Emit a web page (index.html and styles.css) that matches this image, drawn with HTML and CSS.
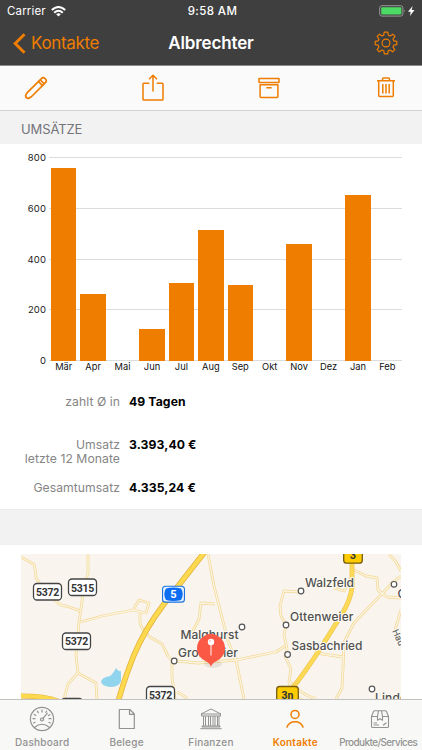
FILE: index.html
```html
<!DOCTYPE html>
<html lang="de">
<head>
<meta charset="utf-8">
<title>Albrechter</title>
<link rel="stylesheet" href="styles.css">
</head>
<body>
<div class="app">
  <header class="header">
    <div class="status">
      <div class="status-left"><span class="carrier">Carrier</span>
        <svg class="wifi" width="15" height="11" viewBox="0 0 15 11"><g fill="none" stroke="#fff" stroke-width="2"><path d="M.8 4.1Q7.5-2.1 14.2 4.1"/><path d="M3.2 6.7Q7.5 2.7 11.8 6.7"/></g><path d="M5.2 8.2Q7.5 6.3 9.8 8.2L7.5 10.6z" fill="#fff"/></svg>
      </div>
      <span class="clock">9:58 AM</span>
      <svg class="battery" width="38" height="12" viewBox="0 0 38 12"><rect x=".7" y=".7" width="23.2" height="10.4" rx="2.2" fill="none" stroke="#999" stroke-width="1"/><rect x="2.2" y="2.2" width="20.2" height="7.4" rx="1" fill="#4cd964"/><path d="M25.2 4.2q1.6 1.7 0 3.4z" fill="#999"/><path d="M33.6.9L29 6.7h2.7L30.9 11l4.6-6h-2.8z" fill="#fff"/></svg>
    </div>
    <nav class="navbar">
      <a class="back"><svg width="13" height="21" viewBox="0 0 13 21"><path d="M11.5 1.2L2.2 10.5l9.3 9.3" fill="none" stroke="#ef7d00" stroke-width="3"/></svg><span>Kontakte</span></a>
      <h1 class="title">Albrechter</h1>
      <svg class="gear" width="24" height="24" viewBox="0 0 24 24"><g fill="none" stroke="#ef7d00" stroke-width="1.2" stroke-linejoin="round"><circle cx="12" cy="12" r="3.9"/><path d="M10.2 1.2h3.6l.5 3 1.9.8 2.6-1.8 2.2 2.2L19 8l.8 1.8 3 .5v3.4l-3 .5L19 16l1.8 2.6-2.2 2.2L16 19l-1.8.8-.5 3h-3.4l-.5-3L8 19l-2.6 1.8-2.2-2.2L5 16l-.8-1.8-3-.5v-3.4l3-.5L5 8 3.2 5.4l2.2-2.2L8 5l1.7-.8z"/></g></svg>
    </nav>
  </header>

  <div class="toolbar">
    <svg width="24" height="26" viewBox="0 0 24 26"><g transform="translate(12 13) rotate(-45)" fill="none" stroke="#ef7d00" stroke-width="1.7" stroke-linejoin="round"><path d="M-9.5-2.9H10.5q2.6 0 2.6 2.900t-2.600 2.900H-9.500L-12.800 2q-1.500-2 0-4z"/><path d="M6.300-2.900v5.800M8.800-2.900v5.800"/></g></svg>
    <svg width="24" height="28" viewBox="0 0 24 28"><g fill="none" stroke="#ef7d00" stroke-width="1.5" stroke-linejoin="round"><path d="M8.300 9.200H2.800q-.8 0-.8.8v15.200q0 .8.8.8h18.400q.8 0 .8-.8V10q0-.8-.8-.8h-5.500M12 17.500V1.500M8 5.300l4-4 4 4"/></g></svg>
    <svg width="24" height="24" viewBox="0 0 24 24"><g fill="none" stroke="#ef7d00" stroke-width="1.5" stroke-linejoin="round"><rect x="2" y="2.400" width="20" height="4.200" rx=".4"/><path d="M3.100 8.700h17.800v11.700q0 1-1 1H4.100q-1 0-1-1zM9.300 11.700h5.400"/></g></svg>
    <svg width="24" height="24" viewBox="0 0 24 24"><g fill="none" stroke="#ef7d00" stroke-width="1.5" stroke-linejoin="round"><path d="M3 4.800h18M4.700 4.800v14.700q0 1 1 1h12.600q1 0 1-1V4.800M8.500 4.600V3q0-1 1-1h5q1 0 1 1v1.600M8.800 8v9.500M12 8v9.500M15.200 8v9.500"/></g></svg>
  </div>

  <h2 class="section">UMSÄTZE</h2>

  <section class="chart">
    <div class="y-axis"><span>800</span><span>600</span><span>400</span><span>200</span><span>0</span></div>
    <div class="plot-wrap">
      <div class="plot">
        <div class="col"><div class="bar" style="height:94.8%"></div></div>
        <div class="col"><div class="bar" style="height:33%"></div></div>
        <div class="col"></div>
        <div class="col"><div class="bar" style="height:15.8%"></div></div>
        <div class="col"><div class="bar" style="height:38.4%"></div></div>
        <div class="col"><div class="bar" style="height:64.2%"></div></div>
        <div class="col"><div class="bar" style="height:37.2%"></div></div>
        <div class="col"></div>
        <div class="col"><div class="bar" style="height:57.5%"></div></div>
        <div class="col"></div>
        <div class="col"><div class="bar" style="height:81.3%"></div></div>
        <div class="col"></div>
      </div>
      <div class="x-axis"><span>Mär</span><span>Apr</span><span>Mai</span><span>Jun</span><span>Jul</span><span>Aug</span><span>Sep</span><span>Okt</span><span>Nov</span><span>Dez</span><span>Jan</span><span>Feb</span></div>
    </div>
  </section>

  <dl class="stats">
    <dt>zahlt Ø in</dt><dd>49 Tagen</dd>
    <dt>Umsatz<br>letzte 12 Monate</dt><dd>3.393,40 €</dd>
    <dt>Gesamtumsatz</dt><dd>4.335,24 €</dd>
  </dl>

  <div class="divider"></div>

  <div class="map-wrap">
    <svg class="map" width="380" height="145" viewBox="21 554 380 145">
      <rect x="21" y="554" width="380" height="145" fill="#f9f5ee"/>
      <defs>
        <g id="roads" fill="none" stroke-linejoin="round">
          <path d="M21 557L34 564.5Q36 571 36 578L44 590L57 602Q61 606 66 606L75 609L80 611"/>
          <path d="M88 554V574L83 586L82 602L79 622L76 655L78 673L68 684L64 699"/>
          <path d="M78 673L96 683L97 699"/>
          <path d="M81 622L102 616L133 610L139 600L149 603L146 613L133 610M140 612L140 622Q141 630 150 637L162 644L168 656L172 661L172 677L175 699"/>
          <path d="M177 661L198 663L236 660L276 652L285 646"/>
          <path d="M177 692Q184 695 187 699"/>
          <path d="M208 554L214 586L228 641L236 660L244 699"/>
          <path d="M190 637L199 619L201 603L215 604"/>
          <path d="M301 592L284 591L280 606L281 616L286 625L284 635L287 649L285 656L291 669L289 682L293 695L304 701"/>
          <path d="M290 682Q300 694 316 699"/>
          <path d="M334 588L344 591L349 582"/>
          <path d="M316 653L343 657"/>
          <path d="M354 570L366 576L377 578L378 590L382 594L370 606L354 623L344 642L343 668L342 688L336 699"/>
          <path d="M378 590L387 597L401 598M382 594L392 583L401 576M389 554L396 562L401 571M401 610L395 630"/>
        </g>
      </defs>
      <use href="#roads" stroke="#f2d998" stroke-width="2.8"/>
      <use href="#roads" stroke="#fcf4df" stroke-width="1.3"/>
      <g fill="none">
        <path d="M205.500 551L164 604Q145 629 134 655Q124 680 118 702" stroke="#e1ad3a" stroke-width="5.600"/>
        <path d="M205.500 551L164 604Q145 629 134 655Q124 680 118 702" stroke="#fdd94e" stroke-width="4.200"/>
        <path d="M352 560V588Q350 601 342 614L322 646Q306 671 291 690" stroke="#ecc04a" stroke-width="4.800"/>
        <path d="M352 560V588Q350 601 342 614L322 646Q306 671 291 690" stroke="#fdda56" stroke-width="3.600"/>
        <path d="M20 696Q45 696 58 701" stroke="#e4b544" stroke-width="5"/>
        <path d="M20 696Q45 696 58 701" stroke="#fdd94e" stroke-width="3.800"/>
      </g>
      <path d="M101 681Q103 677 110 676Q113 674 116 668Q118 672 121 671L121 681Q119 687 110 687Q101 686 101 681z" fill="#91d4ee"/>
      <g class="shield">
        <rect x="33.500" y="583.500" width="28" height="16.500" rx="3.500"/><text x="47.500" y="595.800">5372</text>
        <rect x="68.500" y="579" width="28" height="16.500" rx="3.500"/><text x="82.500" y="591.500">5315</text>
        <rect x="62.500" y="633" width="28" height="16.500" rx="3.500"/><text x="76.500" y="645.300">5372</text>
        <rect x="146.500" y="686.500" width="28" height="16.500" rx="3.500"/><text x="160.500" y="698.600">5372</text>
        <rect x="61.500" y="698.300" width="21" height="16" rx="3.500"/>
      </g>
      <rect x="162" y="585.700" width="23" height="17" rx="3.500" fill="#1a73de"/>
      <rect x="163.100" y="586.800" width="20.800" height="14.800" rx="2.500" fill="#e7f2ff"/>
      <path d="M166 588.500Q173.500 586.500 181 588.500Q184.500 594 181 600Q173.500 602 166 600Q162.500 594 166 588.500z" fill="#0c6cf2"/>
      <text class="five" x="173.500" y="598">5</text>
      <g class="federal">
        <rect x="343.700" y="546" width="18.600" height="17.200" rx="3"/><text x="353" y="559">3</text>
        <rect x="276.700" y="686.500" width="21.600" height="17" rx="3"/><text x="287.500" y="698.600">3n</text>
      </g>
      <g class="town">
        <circle cx="301" cy="591" r="2.800"/><circle cx="286" cy="625" r="2.800"/><circle cx="287.600" cy="654.500" r="2.800"/><circle cx="242" cy="627" r="2.800"/><circle cx="174.200" cy="661" r="2.800"/><circle cx="394" cy="584.300" r="2.800"/><circle cx="372" cy="689" r="2.800"/>
      </g>
      <g class="place">
        <text x="305" y="587" textLength="49">Walzfeld</text>
        <text x="290" y="621" textLength="63.500">Ottenweier</text>
        <text x="291.500" y="650" textLength="71">Sasbachried</text>
        <text x="180.500" y="639" textLength="58">Malghurst</text>
        <text x="178" y="657" textLength="60">Großweier</text>
        <text x="375" y="701.500" textLength="32">Linde</text>
        <text x="397.500" y="597.500">G</text>
        <text class="small" transform="translate(392 631) rotate(65)">Hau</text>
      </g>
      <ellipse cx="213" cy="664" rx="9" ry="4" fill="#765" opacity=".13"/>
      <path d="M211 666.500Q209.500 662.500 204.500 660.500A14 14 0 1 1 217.500 660.500Q212.500 662.500 211 666.500z" fill="#fc5846"/>
      <path d="M211 643v12.500" stroke="#ffd5d0" stroke-width="1.300"/>
      <circle cx="211" cy="642" r="3.200" fill="#fff"/><circle cx="210" cy="641" r=".8" fill="#fc9a8f"/>
    </svg>
  </div>

  <nav class="tabs">
    <a class="tab"><svg width="26" height="26" viewBox="0 0 26 26"><g fill="none" stroke="#929292" stroke-width="1.200" stroke-linecap="round"><circle cx="13" cy="13" r="11.600"/><path d="M5.500 21.500Q13 15 20.500 21.500"/><circle cx="13" cy="13.500" r="1.500"/><path d="M14 12.300l4.200-5M13 4v2M8.500 5.200l.8 1.600M5.200 8.400l1.600 1M4 12.700h2M4.600 17l1.500-.7M17.500 5.200l-.6 1.200M20.900 8.700l-1.400.8M22 12.700h-2M21.400 17l-1.500-.7"/></g></svg><span>Dashboard</span></a>
    <a class="tab"><svg width="26" height="26" viewBox="0 0 26 26"><path d="M5.300 3.500h10.500l4.500 4.500v14.500h-15zM15.500 3.500v4.800h4.800" fill="none" stroke="#929292" stroke-width="1.200" stroke-linejoin="round"/></svg><span>Belege</span></a>
    <a class="tab"><svg width="26" height="26" viewBox="0 0 26 26"><g fill="none" stroke="#929292" stroke-width="1" stroke-linejoin="round"><path d="M3 8L13 3l10 5zM3.500 8v2h19V8M4 20h18v1H4zM2.300 22.700h21.400"/><path d="M5.500 10v10M7.500 10v10M10.500 10v10M12.500 10v10M15 10v10M17 10v10M19.500 10v10M21 10v10"/></g></svg><span>Finanzen</span></a>
    <a class="tab active"><svg width="26" height="26" viewBox="0 0 26 26"><g fill="none" stroke="#ef7d00" stroke-width="1.500" stroke-linecap="round"><circle cx="13" cy="8.400" r="4"/><path d="M5 21q2-5.300 8-5.300t8 5.300"/></g></svg><span>Kontakte</span></a>
    <a class="tab wide"><svg width="26" height="26" viewBox="0 0 26 26"><g fill="none" stroke="#929292" stroke-width="1.100" stroke-linejoin="round"><path d="M4.500 10.500v9.700q0 1.300 1.300 1.300h14.400q1.300 0 1.300-1.300v-9.700l-2-5q-.5-.8-1.300-.8H7.800q-.8 0-1.300.8zM4.500 10.500h6M15.500 10.500h6M11.500 4.700l-1 5.800v3.700l2.500-1.500 2.500 1.500v-3.700l-1-5.800M6.500 17h3.500M6.500 19h5.500M16 19.200l3.500-2.500"/></g></svg><span>Produkte/Services</span></a>
  </nav>
</div>
</body>
</html>
```
FILE: styles.css
```css
* { box-sizing: border-box; }
body { margin: 0; background: #fff; font-family: Inter, "Liberation Sans", sans-serif; }
h1, h2, dl, dd { margin: 0; }
svg { display: block; flex: none; }
.app { width: 422px; height: 750px; display: flex; flex-direction: column; overflow: hidden; }
.header { height: 66px; flex: none; background: #3f3f3f; border-bottom: 1px solid #8c8c8c; color: #fff; }
.status { height: 22px; padding: 0 5px 0 7px; display: grid; grid-template-columns: 1fr auto 1fr; align-items: center; }
.status-left { display: flex; align-items: center; gap: 5px; }
.carrier { font-size: 11.5px; letter-spacing: .15px; }
.clock { font-size: 11.5px; font-weight: 500; letter-spacing: .4px; margin-left: 1px; }
.battery { justify-self: end; }
.navbar { height: 42px; padding: 0 24px 0 13px; display: grid; grid-template-columns: 1fr auto 1fr; align-items: center; }
.back { display: flex; align-items: center; gap: 5px; color: #ef7d00; font-size: 17px; letter-spacing: -.35px; }
.title { font-size: 17px; font-weight: 600; letter-spacing: -.15px; margin-left: 11px; }
.gear { justify-self: end; }
.toolbar { height: 45px; flex: none; padding: 0 24px 1px; display: flex; align-items: center; justify-content: space-between; background: #fafafa; border-bottom: 1px solid #d2d2d2; }
.section { height: 33px; flex: none; padding: 2px 21px 0; background: #f2f2f2; color: #747479; font-size: 13px; line-height: 33px; font-weight: 400; letter-spacing: -.1px; }
.chart { height: 229px; flex: none; padding: 13px 20px 0 21px; display: flex; }
.y-axis { width: 28px; height: 216px; margin-top: -6px; padding-right: 3px; display: flex; flex-direction: column; justify-content: space-between; text-align: right; font-size: 9.5px; line-height: 13px; letter-spacing: .1px; color: #222; }
.plot-wrap { flex: 1; }
.plot { height: 204px; display: flex; background: repeating-linear-gradient(to bottom, #dcdcdc 0 1px, transparent 1px 50.75px); }
.col { flex: 1; display: flex; align-items: flex-end; justify-content: center; }
.bar { width: 25.4px; background: #ef7d00; }
.x-axis { display: flex; font-size: 9.3px; line-height: 12px; color: #111; }
.x-axis span { flex: 1; text-align: center; }
.stats { height: 136px; flex: none; padding-top: 22px; display: grid; grid-template-columns: 120px 1fr; grid-template-rows: 43px 43px 20px; column-gap: 9px; font-size: 12.2px; line-height: 14.4px; }
.stats dt { text-align: right; color: #858585; letter-spacing: .05px; }
.stats dd { font-weight: 700; color: #000; letter-spacing: .1px; }
.divider { height: 36px; flex: none; background: #f2f2f2; border-top: 1px solid #ececec; }
.map-wrap { padding: 9px 21px 0; }
.shield rect { fill: #fff; stroke: #444; stroke-width: 1.3; }
.shield text, .federal text, .five { font: 700 10.5px "Roboto", sans-serif; text-anchor: middle; fill: #333; }
.shield text { letter-spacing: -.3px; }
.five { fill: #fff; font-size: 11px; }
.federal rect { fill: #fc0; stroke: #765d12; stroke-width: 1.3; }
.town circle { fill: #fff; stroke: #555; stroke-width: 1.2; }
.place text { font-size: 12px; font-weight: 500; fill: #505050; stroke: #fbf8f2; stroke-width: 2px; paint-order: stroke; }
.place .small { font-size: 9px; font-weight: 400; }
.tabs { height: 51px; flex: none; display: flex; background: #f8f8f6; border-top: 1px solid #c2c2c0; }
.tab { width: 84.4px; padding-top: 6px; display: flex; flex-direction: column; align-items: center; color: #929292; font-size: 10px; line-height: 13px; font-weight: 500; gap: 4px; letter-spacing: .25px; white-space: nowrap; }
.active { color: #ef7d00; font-weight: 600; }
.wide span { letter-spacing: -.55px; font-size: 9.9px; margin-right: 3px; }
```
